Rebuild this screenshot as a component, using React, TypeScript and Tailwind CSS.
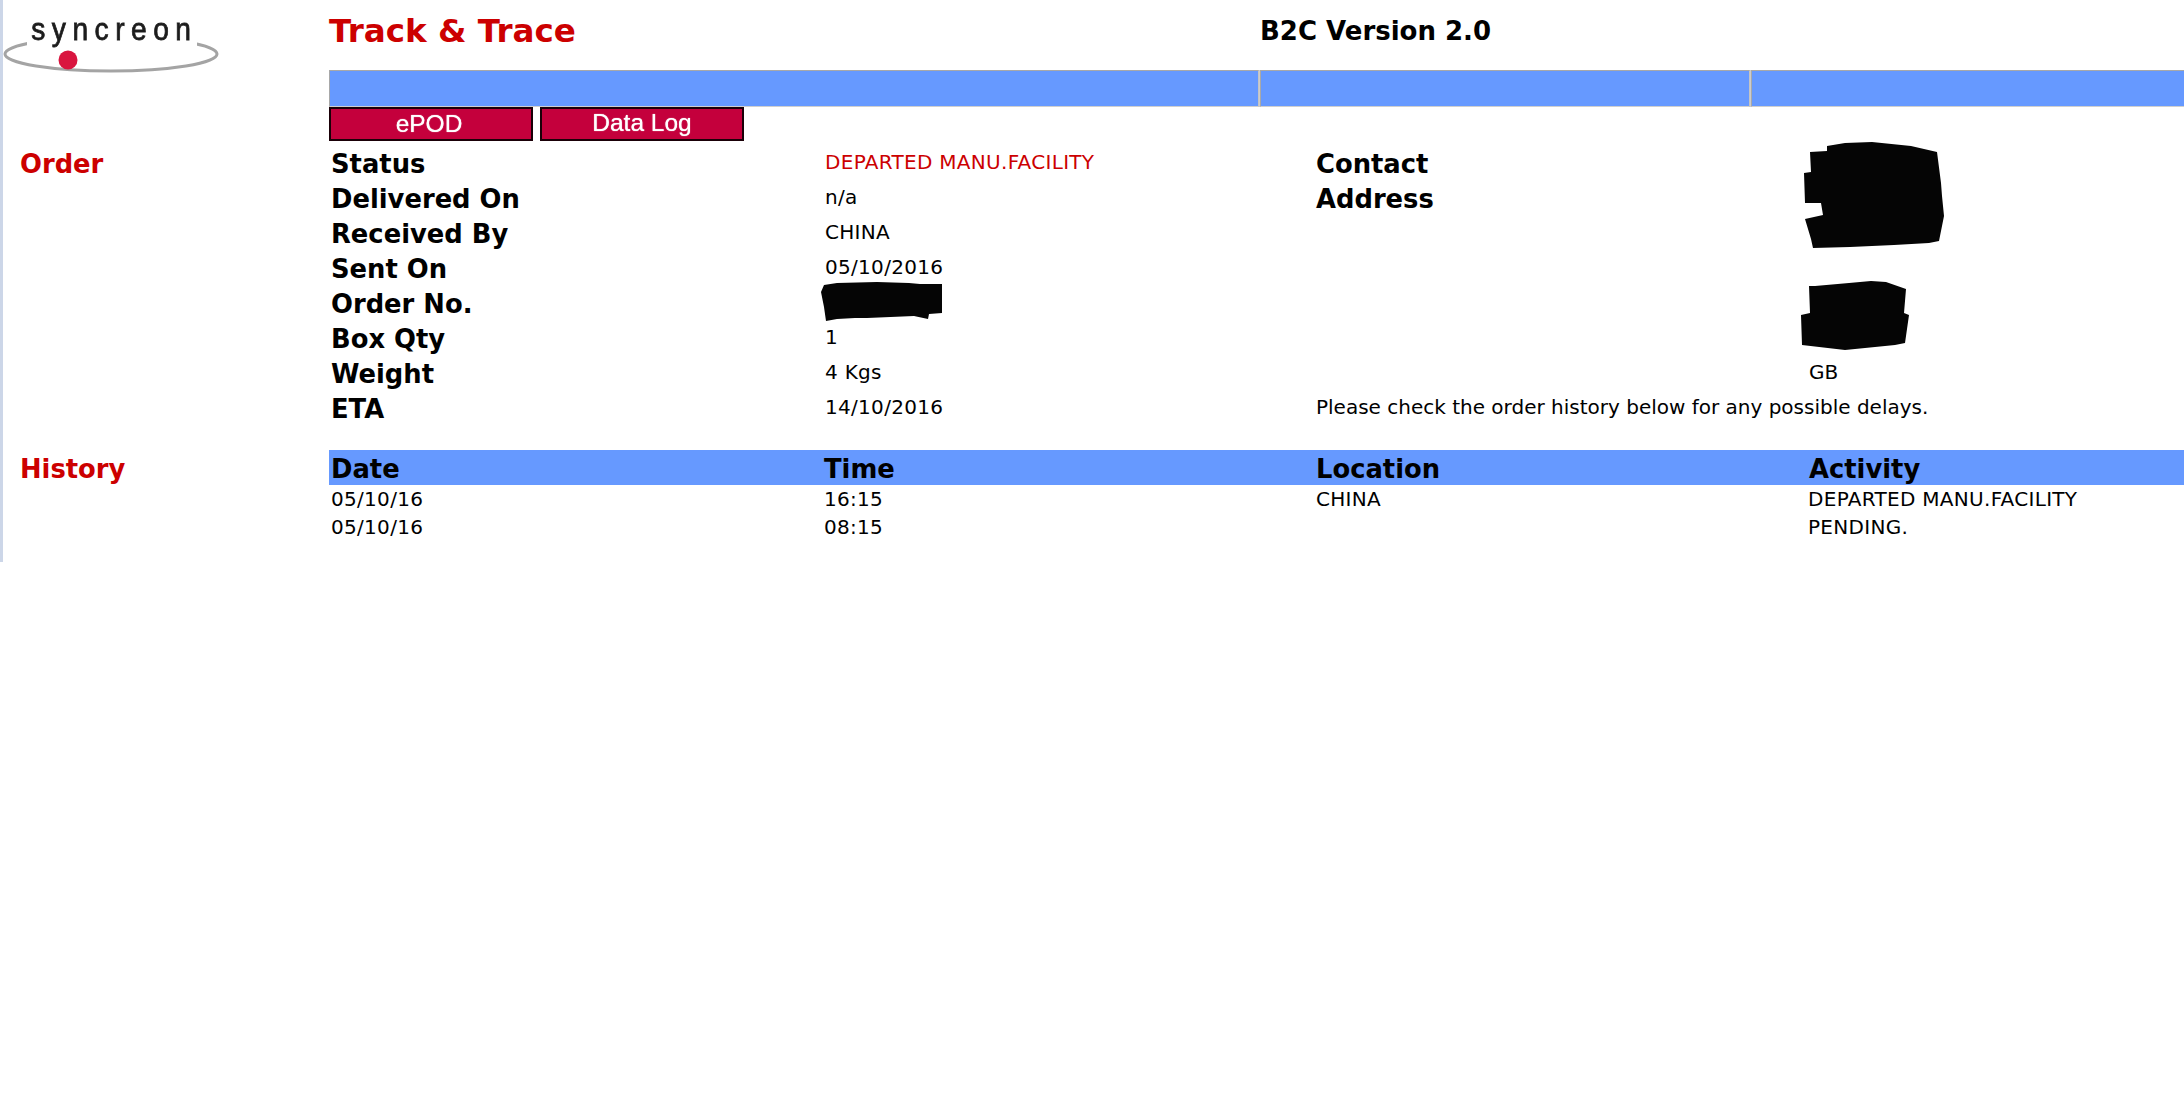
const labelFont = "font-['DejaVu_Sans',sans-serif]";

const orderRows = [
  { label: 'Status', value: 'DEPARTED MANU.FACILITY', red: true },
  { label: 'Delivered On', value: 'n/a' },
  { label: 'Received By', value: 'CHINA' },
  { label: 'Sent On', value: '05/10/2016' },
  { label: 'Order No.', value: '' },
  { label: 'Box Qty', value: '1' },
  { label: 'Weight', value: '4 Kgs' },
  { label: 'ETA', value: '14/10/2016' },
];

const contactRows = [
  { label: 'Contact', value: '' },
  { label: 'Address', value: '' },
  { label: '', value: '' },
  { label: '', value: '' },
  { label: '', value: '' },
  { label: '', value: '' },
  { label: '', value: 'GB' },
  { note: 'Please check the order history below for any possible delays.', label: '', value: '' },
];

const historyRows = [
  { date: '05/10/16', time: '16:15', location: 'CHINA', activity: 'DEPARTED MANU.FACILITY' },
  { date: '05/10/16', time: '08:15', location: '', activity: 'PENDING.' },
];

function Logo() {
  return (
    <svg width="224" height="76" viewBox="0 0 224 76" className="block blur-[0.5px]">
      <ellipse cx="108" cy="54" rx="106" ry="17" fill="none" stroke="#a4a4a4" strokeWidth="3" />
      <rect x="24" y="30" width="170" height="18" fill="#ffffff" />
      <text x="28" y="40" transform="translate(3.6 0) scale(0.88 1)" fontFamily="Liberation Sans, sans-serif" fontSize="32" letterSpacing="7.4" fill="#1c1c1c" stroke="#1c1c1c" strokeWidth="0.8">
        syncreon
      </text>
      <circle cx="65" cy="60" r="9.5" fill="#d9153f" />
    </svg>
  );
}

function Scribble({ w, h, points }: { w: number; h: number; points: string }) {
  return (
    <svg width={w} height={h} viewBox={`0 0 ${w} ${h}`} className="block">
      <polygon points={points} fill="#050505" />
    </svg>
  );
}

function App() {
  return (
    <div className={`w-[2184px] h-[1094px] overflow-hidden bg-white text-black ${labelFont}`}>
      <div className="h-[562px] border-l-[3px] border-[#ccd6e8]">
        <div className="flex">
          <div className="w-[326px] shrink-0">
            <div className="h-[70px]">
              <Logo />
            </div>
          </div>
          <div className="flex-1 min-w-0">
            <div className="h-[70px] flex">
              <div className="w-[931px] pt-[11px] text-[32.6px] leading-[40px] font-bold text-[#cc0000]">Track &amp; Trace</div>
              <div className="pt-[13px] text-[26px] leading-[36px] font-bold">B2C Version 2.0</div>
            </div>
            <div className="flex h-[37px] gap-[1px] bg-[#cccccc]">
              <div className="w-[930px] bg-[#6699ff] border border-[#a8a8a8] border-b-[#cfcfcf] border-r-[#c4c4c4]" />
              <div className="w-[490px] bg-[#6699ff] border border-[#a8a8a8] border-b-[#cfcfcf] border-r-[#c4c4c4]" />
              <div className="flex-1 bg-[#6699ff] border border-[#a8a8a8] border-b-[#cfcfcf] border-r-0" />
            </div>
            <div className="flex gap-[7px] h-[34px]">
              <div className="w-[204px] h-[34px] pr-[4px] bg-[#c4003c] border-2 border-[#1a0008] flex items-center justify-center text-white text-[24.5px] font-['Liberation_Sans',sans-serif] blur-[0.4px] [text-shadow:0_0_1px_#ffffff]">ePOD</div>
              <div className="w-[204px] h-[34px] pb-[2px] bg-[#c4003c] border-2 border-[#1a0008] flex items-center justify-center text-white text-[24.5px] font-['Liberation_Sans',sans-serif] blur-[0.4px] [text-shadow:0_0_1px_#ffffff]">Data Log</div>
            </div>
          </div>
        </div>

        {/* ORDER */}
        <div className="flex h-[309px]">
          <div className="w-[326px] shrink-0 pl-[17px] pt-[5px] text-[25.8px] leading-[37px] font-bold text-[#cc0000]">Order</div>
          <div className="flex-1 min-w-0 flex pt-[4px]">
            <div className="w-[494px] pl-[2px]">
              {orderRows.map((r) => (
                <div key={r.label} className="h-[35px] text-[25.8px] leading-[38px] font-bold">{r.label}</div>
              ))}
            </div>
            <div className="w-[492px] pl-[2px]">
              {orderRows.map((r) => (
                <div key={r.label} className={`relative h-[35px] text-[20px] tracking-[0.3px] leading-[35px] ${r.red ? 'text-[#cc0000]' : ''}`}>
                  {r.label === 'Order No.' ? (
                    <div className="absolute left-[-4px] top-[-3px]">
                      <Scribble w={122} h={40} points="0,10 3,3 16,1 56,0 88,1 99,2 121,2 121,31 108,32 107,37 93,34 46,36 34,36 16,37 5,39 3,25" />
                    </div>
                  ) : (
                    r.value
                  )}
                </div>
              ))}
            </div>
            <div className="w-[493px] pl-[1px]">
              {contactRows.map((r, i) => (
                <div key={i} className={`whitespace-nowrap h-[35px] ${r.note ? 'text-[20px] leading-[35px]' : 'text-[25.8px] leading-[38px] font-bold'}`}>
                  {r.note || r.label}
                </div>
              ))}
            </div>
            <div className="flex-1 relative">
              {contactRows.map((r, i) => (
                <div key={i} className="h-[35px] text-[20px] leading-[35px] pl-[1px]">{r.value}</div>
              ))}
              <div className="absolute left-[-4px] top-[-3px]">
                <Scribble w={140} h={107} points="23,4 41,1 68,0 107,4 133,10 137,41 138,54 140,74 135,99 125,101 90,103 46,105 9,106 7,97 1,77 19,73 17,61 1,61 0,31 7,30 6,10 23,9" />
              </div>
              <div className="absolute left-[-7px] top-[136px]">
                <Scribble w={108} h={70} points="14,5 48,2 70,0 85,1 105,8 103,32 108,34 104,62 94,64 44,69 1,64 0,34 9,32 8,5" />
              </div>
            </div>
          </div>
        </div>

        {/* HISTORY */}
        <div className="flex">
          <div className="w-[326px] shrink-0 pl-[17px] h-[35px] text-[25.8px] leading-[38px] font-bold text-[#cc0000]">History</div>
          <div className="flex-1 min-w-0">
            <div className="grid grid-cols-[493px_492px_493px_1fr] h-[35px] bg-[#6699ff] text-[25.8px] leading-[38px] font-bold">
              <div className="pl-[2px]">Date</div>
              <div className="pl-[2px]">Time</div>
              <div className="pl-[2px]">Location</div>
              <div className="pl-[2px]">Activity</div>
            </div>
            {historyRows.map((r) => (
              <div key={r.time} className="grid grid-cols-[493px_492px_493px_1fr] h-[28px] text-[20px] tracking-[0.3px] leading-[28px]">
                <div className="pl-[2px]">{r.date}</div>
                <div className="pl-[2px]">{r.time}</div>
                <div className="pl-[2px]">{r.location}</div>
                <div className="pl-[1px]">{r.activity}</div>
              </div>
            ))}
          </div>
        </div>
      </div>
    </div>
  );
}

export default App;
